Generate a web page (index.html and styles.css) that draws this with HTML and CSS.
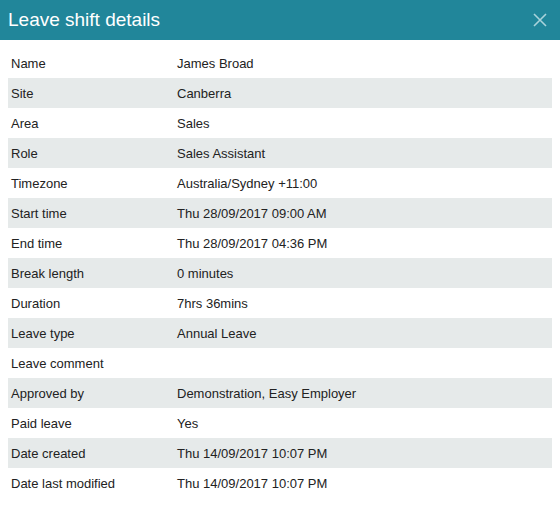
FILE: index.html
```html
<!DOCTYPE html>
<html>
<head>
    <title>Leave shift details</title>
    <link rel="stylesheet" href="styles.css">
</head>
<body>
    <div class="header">
        <h1 class="title">Leave shift details</h1>
        <span class="close">
            <svg width="14" height="14" viewBox="0 0 14 14"><path d="M1 1L13 13M13 1L1 13" stroke="currentColor" stroke-width="1.6" fill="none"/></svg>
        </span>
    </div>
    <div class="content">
        <table class="details">
            <tr><td class="label">Name</td><td>James Broad</td></tr>
            <tr><td class="label">Site</td><td>Canberra</td></tr>
            <tr><td class="label">Area</td><td>Sales</td></tr>
            <tr><td class="label">Role</td><td>Sales Assistant</td></tr>
            <tr><td class="label">Timezone</td><td>Australia/Sydney +11:00</td></tr>
            <tr><td class="label">Start time</td><td>Thu 28/09/2017 09:00 AM</td></tr>
            <tr><td class="label">End time</td><td>Thu 28/09/2017 04:36 PM</td></tr>
            <tr><td class="label">Break length</td><td>0 minutes</td></tr>
            <tr><td class="label">Duration</td><td>7hrs 36mins</td></tr>
            <tr><td class="label">Leave type</td><td>Annual Leave</td></tr>
            <tr><td class="label">Leave comment</td><td></td></tr>
            <tr><td class="label">Approved by</td><td>Demonstration, Easy Employer</td></tr>
            <tr><td class="label">Paid leave</td><td>Yes</td></tr>
            <tr><td class="label">Date created</td><td>Thu 14/09/2017 10:07 PM</td></tr>
            <tr><td class="label">Date last modified</td><td>Thu 14/09/2017 10:07 PM</td></tr>
        </table>
    </div>
</body>
</html>
```

FILE: styles.css
```css
body {
    font-family: "Liberation Sans", Arial, sans-serif;
    margin: 0;
    padding: 0;
    background-color: #fff;
    color: #222;
}
.header {
    display: flex;
    align-items: center;
    justify-content: space-between;
    height: 40px;
    padding: 0 13px 0 8px;
    background-color: #21869a;
}
.title {
    margin: 0;
    font-size: 19px;
    font-weight: normal;
    color: #fff;
}
.close {
    display: flex;
    color: #a9d3db;
}
.content {
    padding: 8px;
}
.details {
    width: 100%;
    border-collapse: collapse;
    font-size: 13px;
}
.details td {
    height: 30px;
    padding: 0 3px;
    box-sizing: border-box;
}
.details .label {
    width: 166px;
}
.details tr:nth-child(even) {
    background-color: #e6eaea;
}
```
